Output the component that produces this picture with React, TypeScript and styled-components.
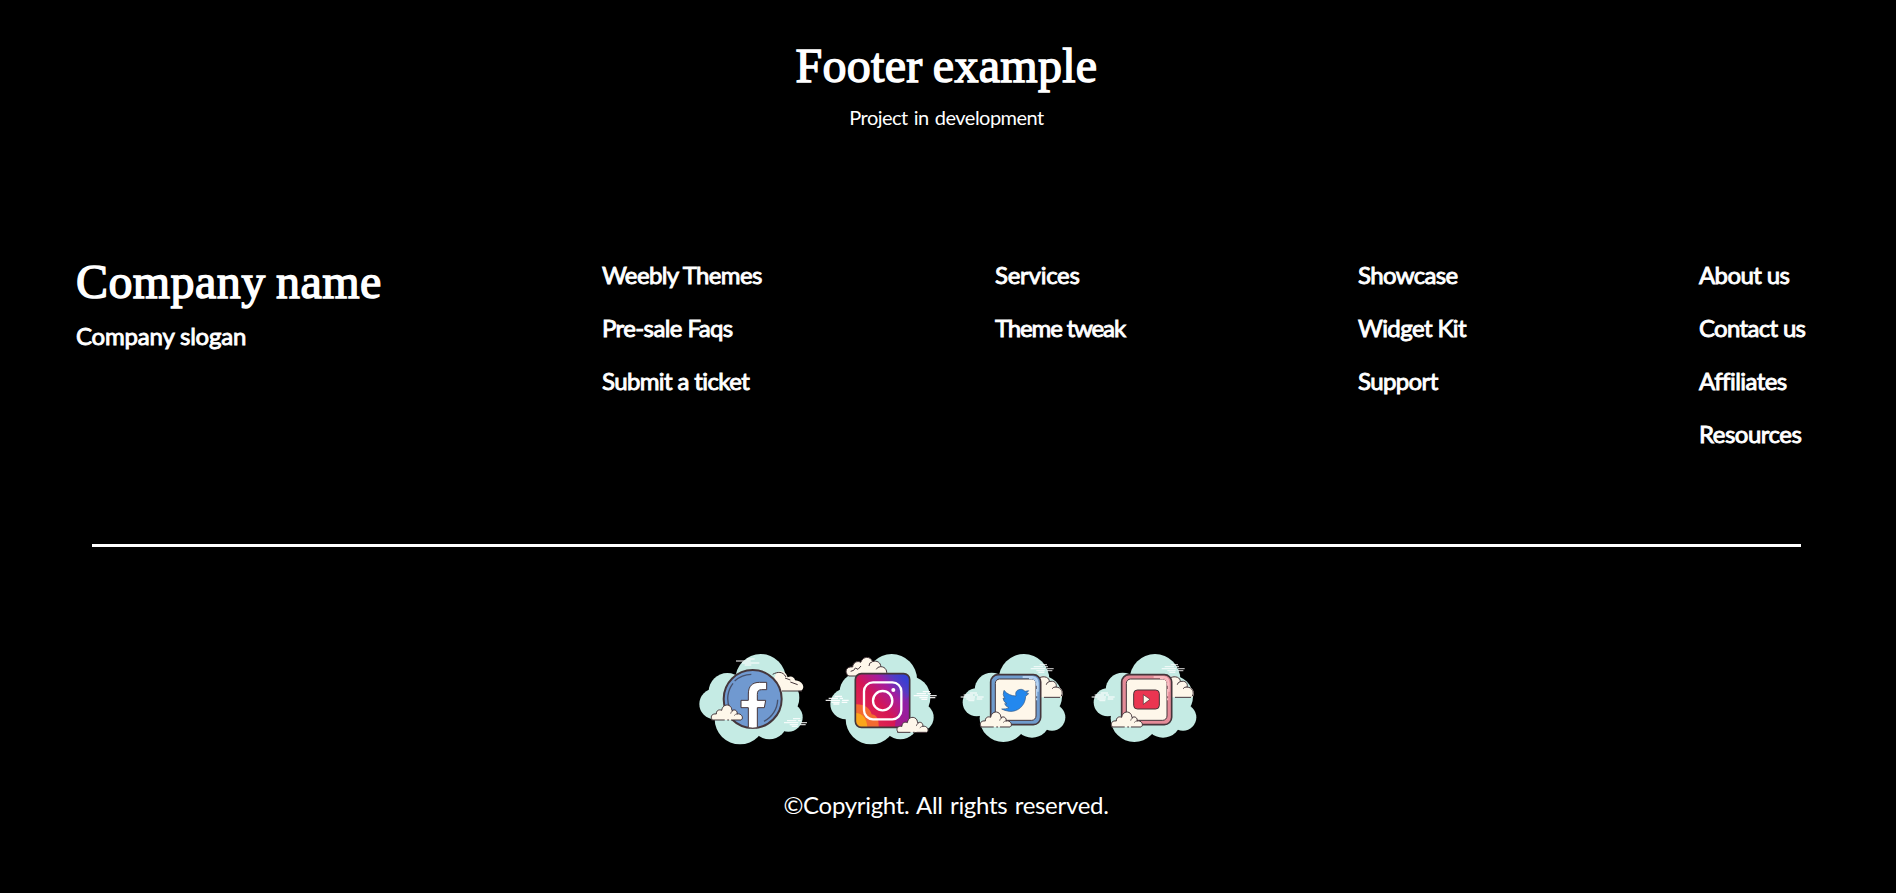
import React from "react";
import styled, { createGlobalStyle } from "styled-components";

const GlobalStyle = createGlobalStyle`
  body {
    margin: 0;
    background: #000;
    color: #fff;
    overflow: hidden;
  }
`;

const Page = styled.footer`
  box-sizing: border-box;
  height: 893px;
  padding-top: 38px;
  background: #000;
  font-family: Lato, "Liberation Sans", sans-serif;
`;

const Title = styled.h1<{ $spacing: number }>`
  margin: 0;
  font: 400 48px/56px "Liberation Serif", serif;
  letter-spacing: ${(p) => p.$spacing}px;
  word-spacing: -2px;
  -webkit-text-stroke: 1.4px #fff;
  white-space: nowrap;
`;

const Header = styled.header`
  display: flex;
  flex-direction: column;
  align-items: center;
  height: 210px;
  padding-right: 3px;
`;

const Subtitle = styled.p`
  margin: 11px 0 0;
  font-size: 20px;
  line-height: 24px;
  letter-spacing: -0.52px;
  word-spacing: 1.5px;
`;

const Columns = styled.div`
  display: grid;
  grid-template-columns: 526px 393px 363px 341px 1fr;
  height: 296px;
  padding-left: 76px;
`;

const Brand = styled.div`
  padding-top: 6px;
`;

const Slogan = styled.p`
  margin: 11px 0 0;
  font-size: 24px;
  line-height: 30px;
  letter-spacing: -0.2px;
  -webkit-text-stroke: 0.9px #fff;
`;

const LinkList = styled.ul`
  margin: 0;
  padding: 0;
  list-style: none;
`;

const LinkItem = styled.li<{ $spacing: number }>`
  height: 53px;
  font-size: 24px;
  line-height: 53px;
  letter-spacing: ${(p) => p.$spacing}px;
  white-space: nowrap;
  -webkit-text-stroke: 0.9px #fff;
`;

const Divider = styled.hr`
  height: 3px;
  margin: 0 95px 0 92px;
  border: 0;
  background: #fff;
`;

const SocialRow = styled.div`
  display: flex;
  padding: 98px 0 0 690px;
`;

const SocialIcon = styled.svg`
  display: block;
  width: 130px;
  height: 110px;
`;

const Copyright = styled.p`
  margin: 35px 4px 0 0;
  font-size: 24px;
  line-height: 30px;
  letter-spacing: -0.3px;
  word-spacing: 1.5px;
  text-align: center;
`;

const MINT = "#c5ebe4";
const CREAM = "#fef7ea";
const INK = "#45363b";

const Backdrop = () => (
  <g fill={MINT}>
    <circle cx="212" cy="103" r="76" />
    <circle cx="112" cy="140" r="56" />
    <circle cx="74" cy="177" r="46" />
    <circle cx="150" cy="222" r="76" />
    <circle cx="238" cy="230" r="53" />
    <circle cx="295" cy="217" r="43" />
    <circle cx="263" cy="158" r="65" />
  </g>
);

const Puff = ({ x, y }: { x: number; y: number }) => (
  <g transform={`translate(${x} ${y})`} strokeLinecap="round" strokeLinejoin="round">
    <path
      d="M2 46 C-5 34 4 26 15 28 C14 18 23 13 31 17 C33 3 46 -4 57 5 C62 10 61 16 62 18 C70 12 80 19 77 28 C90 25 98 39 90 46 Z"
      fill={CREAM}
    />
    <path
      d="M2 44 C-5 34 4 26 15 28 C14 18 23 13 31 17 C33 3 46 -4 57 5 C62 10 61 16 62 18 C70 12 80 19 77 28 C90 25 98 39 91 45 M2 46 H39 M49 46 H52 M60 46 H88"
      fill="none"
      stroke={INK}
      strokeWidth="3"
    />
    <path d="M64 19 q-6 1 -6 7 M77 28 q-5 0 -8 4" fill="none" stroke={INK} strokeWidth="2" />
  </g>
);

const Wind = ({ x, y, opacity = 0.9 }: { x: number; y: number; opacity?: number }) => (
  <path
    transform={`translate(${x} ${y})`}
    d="M27 -12 H49 M9 -6 H37 M42 -6 H52 M0 0 H43 M49 0 H69 M17 6 H42 M48 6 H65 M23 11 H41"
    stroke="#fff"
    strokeWidth="4"
    opacity={opacity}
    fill="none"
  />
);

const FacebookIcon = () => (
  <SocialIcon viewBox="0 0 390 330" role="img" aria-label="Facebook">
    <Backdrop />
    <path d="M138 48 H182 M156 54 H208 M170 42 H194 M164 60 H184" stroke="#fff" strokeWidth="3" />
    <path
      d="M252 140 C247 127 248 111 257 88 C262 75 286 73 293 97 C304 91 314 98 315 106 C336 107 348 127 334 137 Z"
      fill={CREAM}
    />
    <path
      d="M248 88 C263 80 278 78 288 96 M285 99 L301 105 M301 111 L323 119 M276 138 H336"
      fill="none"
      stroke={INK}
      strokeWidth="3"
    />
    <circle cx="188" cy="162" r="87" fill="#7099d0" stroke={INK} strokeWidth="6" />
    <path
      d="M119 190 A75 75 0 0 1 129 115 M134 108 A76 76 0 0 1 184 88 M263 164 A75 75 0 0 1 222 229 M254 198 A75 75 0 0 1 239 217"
      fill="none"
      stroke="#46516d"
      strokeWidth="4"
    />
    <path
      d="M175 248 V188 H153 V166 H175 V147 C175 123 187 112 209 112 H230 V134 H215 C205 134 202 139 202 148 V166 H227 L223 188 H202 V248 Q188 251 175 248 Z"
      fill="#fff"
      stroke={INK}
      strokeWidth="3"
      strokeLinejoin="round"
    />
    <Puff x={64} y={179} />
    <Wind x={282} y={233} opacity={0.8} />
  </SocialIcon>
);

const InstagramIcon = () => (
  <SocialIcon viewBox="15 0 390 330" role="img" aria-label="Instagram">
    <defs>
      <linearGradient id="instagram-fill" x1="0.05" y1="0.8" x2="0.9" y2="0.05">
        <stop offset="0" stopColor="#e72e4b" />
        <stop offset="0.4" stopColor="#d51655" />
        <stop offset="0.68" stopColor="#a51c9e" />
        <stop offset="0.86" stopColor="#533bc5" />
        <stop offset="1" stopColor="#3440d4" />
      </linearGradient>
    </defs>
    <g transform="translate(18 0)">
      <Backdrop />
    </g>
    <g transform="translate(93 36)">
      <path
        d="M8 57 C-7 45 1 27 20 30 C21 16 35 10 44 16 C52 -4 73 -3 80 14 C92 9 105 17 104 29 C119 29 126 43 120 57 Z"
        fill={CREAM}
        stroke={INK}
        strokeWidth="3"
      />
      <path d="M14 43 l9 -3 l5 -7 l8 4 l9 -10 M78 15 q-9 1 -9 12 M104 29 q-10 0 -13 8" fill="none" stroke={INK} strokeWidth="3" />
    </g>
    <rect x="121" y="86" width="163" height="161" rx="18" fill="url(#instagram-fill)" />
    <path d="M121 178 C151 177 165 191 170 208 C187 211 192 224 191 247 H139 Q121 247 121 229 Z" fill="#f36b31" />
    <path d="M121 204 C143 205 155 219 157 247 H139 Q121 247 121 229 Z" fill="#fba51b" />
    <path d="M284 150 V229 Q284 247 266 247 H240 C240 211 259 180 284 150 Z" fill="#8c20a6" opacity="0.65" />
    <rect x="121" y="86" width="163" height="161" rx="18" fill="none" stroke={INK} strokeWidth="5" />
    <g fill="none" stroke="#fff" strokeWidth="7">
      <rect x="147" y="112" width="112" height="111" rx="27" />
      <circle cx="203" cy="167" r="29" />
    </g>
    <circle cx="235" cy="135" r="6" fill="#fff" />
    <Puff x={246} y={216} />
    <Wind x={32} y={166} />
    <Wind x={296} y={152} />
  </SocialIcon>
);

const FramedBackdrop = () => (
  <g fill={MINT}>
    <circle cx="222" cy="103" r="76" />
    <circle cx="125" cy="134" r="51" />
    <circle cx="80" cy="172" r="42" />
    <circle cx="160" cy="220" r="71" />
    <circle cx="246" cy="224" r="54" />
    <circle cx="306" cy="217" r="40" />
    <circle cx="272" cy="155" r="64" />
  </g>
);

const FrameTile = ({ rim, shine }: { rim: string; shine: string }) => (
  <>
    <Wind x={242} y={71} opacity={0.7} />
    <Wind x={32} y={156} opacity={0.7} />
    <path
      d="M264 157 V98 C281 88 298 96 297 109 C312 105 321 116 319 124 C341 128 342 150 334 157 Z"
      fill={CREAM}
    />
    <path
      d="M268 98 C284 91 299 98 298 110 C312 105 322 115 318 126 C335 127 341 143 334 153 M283 157 H329 M297 110 q-7 2 -8 8 M318 126 q-8 -1 -11 4"
      fill="none"
      stroke={INK}
      strokeWidth="3"
      strokeLinecap="round"
    />
    <rect x="122" y="89" width="150" height="150" rx="22" fill={rim} stroke={INK} strokeWidth="5" />
    <path d="M218 96 H246 Q262 98 263 114 V140" fill="none" stroke={shine} strokeWidth="6" />
    <rect x="136" y="102" width="122" height="124" rx="13" fill={CREAM} stroke={INK} strokeWidth="3" />
    <path d="M237 101 H246 Q259 103 259 116 V122 M260 132 V154 M260 160 V166" fill="none" stroke={shine} strokeWidth="4" />
    <Puff x={91} y={200} />
  </>
);

const TwitterIcon = () => (
  <SocialIcon viewBox="0 0 390 330" role="img" aria-label="Twitter">
    <FramedBackdrop />
    <FrameTile rim="#6f9bcd" shine="#b4d2f2" />
    <path
      d="M162 136 C171 147 184 153 198 153 C194 138 204 133 214 133 Q221 134 225 139 L236 137 L229 145 L236 146 L227 154 C226 183 202 202 177 199 Q164 197 155 192 Q168 193 177 188 Q167 185 164 176 L171 176 Q160 171 159 159 L165 162 Q156 149 162 136 Z"
      fill="#2388ee"
      stroke="#355b87"
      strokeWidth="2"
    />
  </SocialIcon>
);

const YoutubeIcon = () => (
  <SocialIcon viewBox="0 0 390 330" role="img" aria-label="YouTube">
    <g transform="translate(3 0)">
      <FramedBackdrop />
      <FrameTile rim="#e58b98" shine="#f9bac0" />
    </g>
    <rect x="161" y="135" width="77" height="57" rx="11" fill="#ea3551" stroke={INK} strokeWidth="3" />
    <path d="M190 149 L210 163 L190 178 Z" fill={CREAM} stroke={INK} strokeWidth="2" />
  </SocialIcon>
);

const linkColumns: { label: string; spacing: number }[][] = [
  [
    { label: "Weebly Themes", spacing: -0.64 },
    { label: "Pre-sale Faqs", spacing: -0.6 },
    { label: "Submit a ticket", spacing: -0.62 },
  ],
  [
    { label: "Services", spacing: -0.27 },
    { label: "Theme tweak", spacing: -1.16 },
  ],
  [
    { label: "Showcase", spacing: -0.66 },
    { label: "Widget Kit", spacing: -0.58 },
    { label: "Support", spacing: -0.62 },
  ],
  [
    { label: "About us", spacing: -0.6 },
    { label: "Contact us", spacing: -0.68 },
    { label: "Affiliates", spacing: -0.54 },
    { label: "Resources", spacing: -0.5 },
  ],
];

export default function App() {
  return (
    <>
      <GlobalStyle />
      <Page>
        <Header>
          <Title $spacing={0.28}>Footer example</Title>
          <Subtitle>Project in development</Subtitle>
        </Header>
        <Columns>
          <Brand>
            <Title as="h2" $spacing={0.42}>Company name</Title>
            <Slogan>Company slogan</Slogan>
          </Brand>
          {linkColumns.map((links) => (
            <LinkList key={links[0].label}>
              {links.map(({ label, spacing }) => (
                <LinkItem key={label} $spacing={spacing}>{label}</LinkItem>
              ))}
            </LinkList>
          ))}
        </Columns>
        <Divider />
        <SocialRow>
          <FacebookIcon />
          <InstagramIcon />
          <TwitterIcon />
          <YoutubeIcon />
        </SocialRow>
        <Copyright>©Copyright. All rights reserved.</Copyright>
      </Page>
    </>
  );
}
